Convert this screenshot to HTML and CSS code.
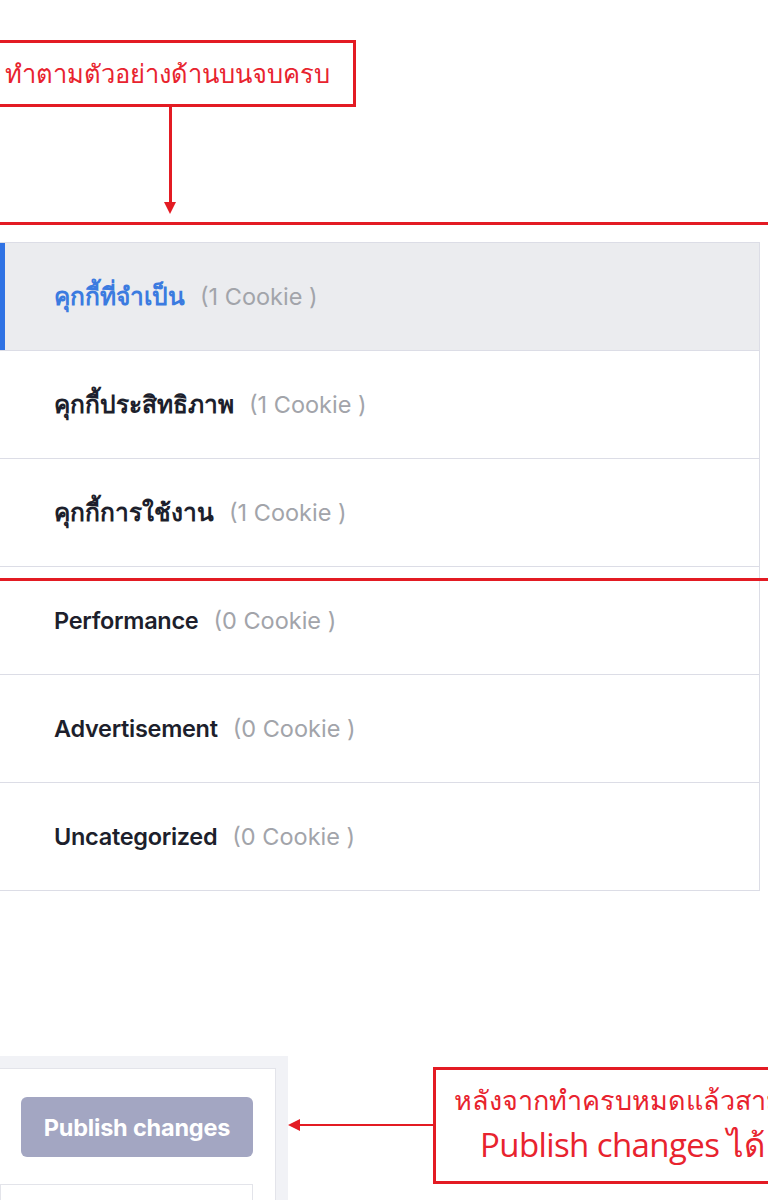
FILE: index.html
```html
<!DOCTYPE html>
<html lang="th">
<head>
  <meta charset="UTF-8" />
  <title>Cookie categories</title>
  <meta name="viewport" content="width=device-width, initial-scale=1" />
  <link rel="stylesheet" href="styles.css">
</head>
<body>

  <div class="page">
    <ul class="cats">
      <li class="cat active"><span class="name th">คุกกี้ที่จำเป็น</span><span class="count">(1 Cookie )</span></li>
      <li class="cat"><span class="name th">คุกกี้ประสิทธิภาพ</span><span class="count">(1 Cookie )</span></li>
      <li class="cat"><span class="name th">คุกกี้การใช้งาน</span><span class="count">(1 Cookie )</span></li>
      <li class="cat"><span class="name">Performance</span><span class="count">(0 Cookie )</span></li>
      <li class="cat"><span class="name">Advertisement</span><span class="count">(0 Cookie )</span></li>
      <li class="cat"><span class="name">Uncategorized</span><span class="count">(0 Cookie )</span></li>
    </ul>

    <div class="publish-panel">
      <div class="publish-card">
        <button class="publish-btn" disabled>Publish changes</button>
        <div class="next-field"></div>
      </div>
    </div>
  </div>

  <!-- annotations drawn over the screenshot -->
  <div class="note note-top">ทำตามตัวอย่างด้านบนจบครบ</div>
  <div class="arrow-down"></div>
  <div class="red-line line-1"></div>
  <div class="red-line line-2"></div>

  <div class="arrow-left"></div>
  <div class="note note-bottom">
    <div class="note-th">หลังจากทำครบหมดแล้วสามารถกด</div>
    <div class="note-en">Publish changes ได้</div>
  </div>

</body>
</html>
```

FILE: styles.css
```css
body {
  margin: 0;
  background: #fff;
  font-family: Inter, "Noto Sans", sans-serif;
  overflow: hidden;
}
.page {
  width: 768px;
  height: 1200px;
  padding-top: 242px;
  box-sizing: border-box;
}

/* category list */
.cats {
  list-style: none;
  margin: 0 0 0 -1px;
  padding: 0;
  width: 761px;
  border: 1px solid #dcdde6;
  box-sizing: border-box;
}
.cat {
  height: 107px;
  display: flex;
  align-items: center;
  padding-left: 54px;
  border-bottom: 1px solid #dcdde6;
  font-size: 23.5px;
}
.cat:last-child { border-bottom: none; }
.cat .name { font-weight: 600; color: #1d1f2c; letter-spacing: -0.3px; }
.cat .name.th { font-size: 24.5px; letter-spacing: 0; }
.cat .count { color: #a2a4aa; margin-left: 15px; }
.cat.active {
  background: #ebecef;
  box-shadow: inset 5px 0 0 #2f72e4;
}
.cat.active .name { color: #3b7be0; }

/* publish panel */
.publish-panel {
  margin-top: 165px;
  width: 288px;
  height: 145px;
  background: #f1f2f6;
  padding-top: 12px;
  box-sizing: border-box;
}
.publish-card {
  width: 277px;
  height: 140px;
  margin-left: -1px;
  background: #fff;
  border: 1px solid #e3e4ea;
  padding: 28px 0 0 21px;
  box-sizing: border-box;
}
.publish-btn {
  width: 232px;
  height: 60px;
  border: none;
  border-radius: 6px;
  background: #a3a6c2;
  color: #fff;
  font-family: Inter, sans-serif;
  font-weight: 700;
  font-size: 23.5px;
  letter-spacing: -0.2px;
}
.next-field {
  margin: 27px 0 0 -21px;
  width: 253px;
  height: 30px;
  border: 1px solid #e3e4ea;
  box-sizing: border-box;
}

/* annotations */
.note {
  position: absolute;
  border: 3px solid #e31b23;
  color: #e8232e;
  background: #fff;
  box-sizing: border-box;
  font-family: "Open Sans", "Noto Sans", sans-serif;
}
.note-top {
  left: -3px;
  top: 40px;
  width: 359px;
  height: 67px;
  font-size: 25.5px;
  line-height: 60px;
  padding-left: 5px;
  white-space: nowrap;
}
.arrow-down {
  position: absolute;
  left: 169px;
  top: 106px;
  width: 3px;
  height: 98px;
  background: #e31b23;
}
.arrow-down::after {
  content: "";
  position: absolute;
  left: -5px;
  bottom: -10px;
  border-left: 6.5px solid transparent;
  border-right: 6.5px solid transparent;
  border-top: 12px solid #e31b23;
}
.red-line {
  position: absolute;
  left: 0;
  width: 768px;
  height: 3px;
  background: #e31b23;
}
.line-1 { top: 222px; }
.line-2 { top: 578px; }

.arrow-left {
  position: absolute;
  left: 300px;
  top: 1124px;
  width: 134px;
  height: 2px;
  background: #e31b23;
}
.arrow-left::before {
  content: "";
  position: absolute;
  left: -12px;
  top: -5px;
  border-top: 6px solid transparent;
  border-bottom: 6px solid transparent;
  border-right: 12px solid #e31b23;
}
.note-bottom {
  left: 433px;
  top: 1067px;
  width: 360px;
  height: 117px;
  padding: 10px 0 0 18px;
  white-space: nowrap;
  overflow: hidden;
}
.note-th { font-size: 27px; line-height: 40px; }
.note-en { font-size: 33px; line-height: 50px; padding-left: 26px; letter-spacing: -0.6px; }
```
